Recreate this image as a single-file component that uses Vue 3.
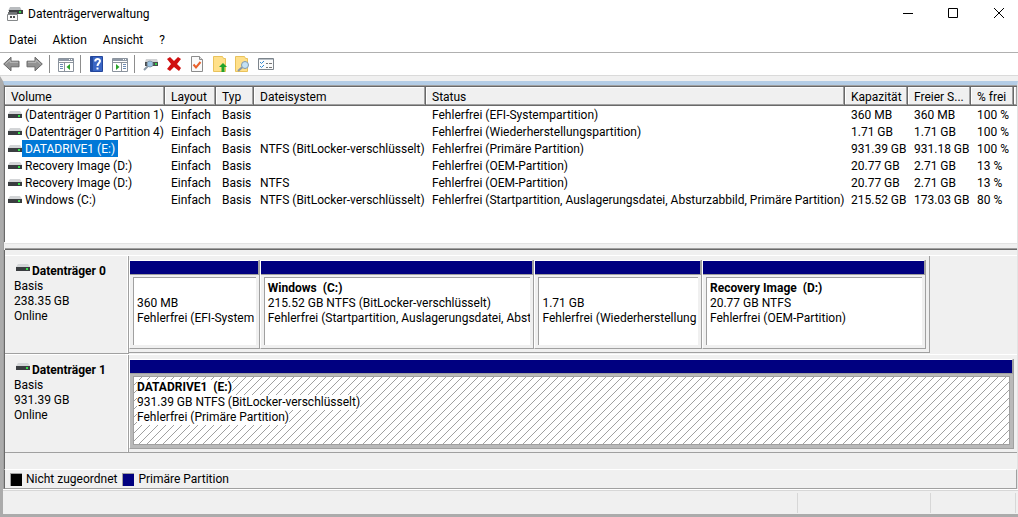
<script setup>
import { ref } from 'vue'

const columns = ['Volume', 'Layout', 'Typ', 'Dateisystem', 'Status', 'Kapazität', 'Freier S...', '% frei']

const volumes = [
  ['(Datenträger 0 Partition 1)', 'Einfach', 'Basis', '', 'Fehlerfrei (EFI-Systempartition)', '360 MB', '360 MB', '100 %'],
  ['(Datenträger 0 Partition 4)', 'Einfach', 'Basis', '', 'Fehlerfrei (Wiederherstellungspartition)', '1.71 GB', '1.71 GB', '100 %'],
  ['DATADRIVE1 (E:)', 'Einfach', 'Basis', 'NTFS (BitLocker-verschlüsselt)', 'Fehlerfrei (Primäre Partition)', '931.39 GB', '931.18 GB', '100 %'],
  ['Recovery Image (D:)', 'Einfach', 'Basis', '', 'Fehlerfrei (OEM-Partition)', '20.77 GB', '2.71 GB', '13 %'],
  ['Recovery Image (D:)', 'Einfach', 'Basis', 'NTFS', 'Fehlerfrei (OEM-Partition)', '20.77 GB', '2.71 GB', '13 %'],
  ['Windows (C:)', 'Einfach', 'Basis', 'NTFS (BitLocker-verschlüsselt)', 'Fehlerfrei (Startpartition, Auslagerungsdatei, Absturzabbild, Primäre Partition)', '215.52 GB', '173.03 GB', '80 %'],
]
const selected = ref(2)

const disks = [
  {
    name: 'Datenträger 0',
    size: '238.35 GB',
    span: 90.2,
    partitions: [
      { name: '', info: '360 MB', status: 'Fehlerfrei (EFI-System', weight: 130 },
      { name: 'Windows\u00a0 (C:)', info: '215.52 GB NTFS (BitLocker-verschlüsselt)', status: 'Fehlerfrei (Startpartition, Auslagerungsdatei, Abst', weight: 275 },
      { name: '', info: '1.71 GB', status: 'Fehlerfrei (Wiederherstellung', weight: 167 },
      { name: 'Recovery Image\u00a0 (D:)', info: '20.77 GB NTFS', status: 'Fehlerfrei (OEM-Partition)', weight: 224 },
    ],
  },
  {
    name: 'Datenträger 1',
    size: '931.39 GB',
    span: 100,
    partitions: [
      { name: 'DATADRIVE1\u00a0 (E:)', info: '931.39 GB NTFS (BitLocker-verschlüsselt)', status: 'Fehlerfrei (Primäre Partition)', weight: 1, active: true },
    ],
  },
]
</script>

<template>
  <div class="window">
    <header class="titlebar">
      <svg class="app-icon" width="16" height="16" viewBox="0 0 16 16" aria-hidden="true">
        <path d="M3 1h10l2 4H1z" fill="#b9bcbf" />
        <path d="M2 4h14v4H2z" fill="#3c3f41" />
        <path d="M12 5h2v2h-2z" fill="#35d04a" />
        <path d="M1 6h9v3H1z" fill="#6f7275" />
        <path d="M.5 8.500h10v6H.5z" fill="#fafafa" stroke="#85888a" />
        <path d="M3 10h2v2H3zM6 10h2v2H6z" fill="#4b4e50" />
      </svg>
      <h1>Datenträgerverwaltung</h1>
      <div class="caption">
        <button type="button" aria-label="Minimieren">
          <svg width="12" height="12" viewBox="0 0 12 12"><path d="M2 5.500h10" /></svg>
        </button>
        <button type="button" aria-label="Maximieren">
          <svg width="12" height="12" viewBox="0 0 12 12"><path d="M1.500.500h9v9h-9z" /></svg>
        </button>
        <button type="button" aria-label="Schließen">
          <svg width="12" height="12" viewBox="0 0 12 12"><path d="M1 0l10 10M11 0L1 10" /></svg>
        </button>
      </div>
    </header>

    <nav class="menu">
      <button type="button">Datei</button>
      <button type="button">Aktion</button>
      <button type="button">Ansicht</button>
      <button type="button">?</button>
    </nav>

    <div class="toolbar" role="toolbar" aria-label="Symbolleiste">
      <button type="button" aria-label="Zurück">
        <svg width="17" height="16" viewBox="0 0 17 16">
          <path d="M.7 8L8 1.200v4h8v5.600H8v4z" fill="#929292" stroke="#686868" />
          <path d="M2.500 8L7 4v2.300h8" fill="none" stroke="#bcbcbc" />
        </svg>
      </button>
      <button type="button" aria-label="Vorwärts">
        <svg width="17" height="16" viewBox="0 0 17 16">
          <path d="M16.300 8L9 1.200v4H1v5.600h8v4z" fill="#929292" stroke="#686868" />
          <path d="M2 6.300h8V4l4.500 4" fill="none" stroke="#bcbcbc" />
        </svg>
      </button>
      <span class="sep"></span>
      <button type="button" aria-label="Konsolenstruktur ein-/ausblenden">
        <svg width="16" height="15" viewBox="0 0 16 15">
          <path d="M.5 1.500h15v13H.5z" fill="#fff" stroke="#8b939d" />
          <path d="M1 2h14v2H1z" fill="#8e99a6" />
          <path d="M1 5.500h14M6.500 6v8" stroke="#8b939d" />
          <path d="M11 2h1v1h-1zM13 2h1v1h-1z" fill="#fff" />
          <path d="M2 7.500h3M2 9.500h3M2 11.500h3" stroke="#6b8bb5" />
          <path d="M12 7v6L8.500 10z" fill="#29a329" />
        </svg>
      </button>
      <span class="sep"></span>
      <button type="button" aria-label="Hilfe">
        <svg width="14" height="16" viewBox="0 0 14 16">
          <path d="M.5.500h12v15H.5z" fill="#3a66c5" stroke="#24479c" />
          <path d="M1 1h2v14H1z" fill="#254b9f" />
          <path d="M5.200 5.500C5.200 2.200 10 2.300 10 5c0 2-2.500 2.200-2.500 5" fill="none" stroke="#fff" stroke-width="2" />
          <path d="M6.500 11.500h2v2h-2z" fill="#fff" />
        </svg>
      </button>
      <button type="button" aria-label="Aktionsbereich ein-/ausblenden">
        <svg width="16" height="15" viewBox="0 0 16 15">
          <path d="M.5 1.500h15v13H.5z" fill="#fff" stroke="#8b939d" />
          <path d="M1 2h14v2H1z" fill="#8e99a6" />
          <path d="M1 5.500h14M9.500 6v8" stroke="#8b939d" />
          <path d="M11 2h1v1h-1zM13 2h1v1h-1z" fill="#fff" />
          <path d="M11 7.500h3M11 9.500h3M11 11.500h3" stroke="#6b8bb5" />
          <path d="M4 7v6l3.500-3z" fill="#29a329" />
        </svg>
      </button>
      <span class="sep"></span>
      <button type="button" aria-label="Datenträger prüfen">
        <svg width="16" height="16" viewBox="0 0 16 16">
          <path d="M3 3h11l1 3H2z" fill="#d0d2d4" />
          <path d="M2 6h13v4H2z" fill="#4a4d50" />
          <path d="M12 7h2v2h-2z" fill="#35d04a" />
          <path d="M5 10l-4 4" stroke="#8a98a5" stroke-width="2" />
          <circle cx="7" cy="8" r="3" fill="#9cc4e4" stroke="#8299ab" />
        </svg>
      </button>
      <button type="button" aria-label="Löschen">
        <svg width="16" height="16" viewBox="0 0 16 16">
          <path d="M1 3l3-2 4 4 4-4 3 2-4 5 4 4-2 3-5-4-4 4-3-2 4-5z" fill="#d01010" />
        </svg>
      </button>
      <button type="button" aria-label="Eigenschaften">
        <svg width="14" height="16" viewBox="0 0 14 16">
          <path d="M1.500.500h8l3 3v12h-11z" fill="#fafafa" stroke="#8c8c8c" />
          <path d="M9.500.500v3h3" fill="#ddd" stroke="#8c8c8c" />
          <path d="M3.500 8.500l2.500 3L10.500 6" fill="none" stroke="#e9602a" stroke-width="2" />
        </svg>
      </button>
      <button type="button" aria-label="Übergeordneter Ordner">
        <svg width="14" height="16" viewBox="0 0 14 16">
          <path d="M.5.500h9l1 2h2v13H.5z" fill="#ffe08a" stroke="#e9c25c" />
          <path d="M10 7l4 4h-2.500v5h-3v-5H6z" fill="#20a32c" />
        </svg>
      </button>
      <button type="button" aria-label="Suchen">
        <svg width="15" height="16" viewBox="0 0 15 16">
          <path d="M.5.500h9l1 2h2v13H.5z" fill="#ffe08a" stroke="#e9c25c" />
          <path d="M7.500 11L3 15" stroke="#8a98a5" stroke-width="2" />
          <circle cx="10" cy="9" r="3.500" fill="#c3e1f5" stroke="#8299ab" />
        </svg>
      </button>
      <button type="button" aria-label="Ansichtsoptionen">
        <svg width="16" height="14" viewBox="0 0 16 14">
          <path d="M.5 1.500h15v11H.5z" fill="#fbfbfb" stroke="#7d858c" />
          <path d="M1 2.500h14" stroke="#b9c0c7" />
          <path d="M2 5l1.500 1.500L6 4M2 9l1.500 1.500L6 8" fill="none" stroke="#2f86d0" />
          <path d="M8 6.500h2M11 6.500h3M8 10.500h2M11 10.500h3" stroke="#777" />
        </svg>
      </button>
    </div>

    <main class="client">
      <div class="console">
        <section class="list" aria-label="Volumes">
          <table>
            <colgroup>
              <col class="c-volume"><col class="c-layout"><col class="c-type"><col class="c-fs">
              <col><col class="c-size"><col class="c-size"><col class="c-free"><col class="c-end">
            </colgroup>
            <thead>
              <tr>
                <th v-for="c in columns" :key="c" scope="col">{{ c }}</th>
                <td class="filler"></td>
              </tr>
            </thead>
            <tbody>
              <tr v-for="(row, i) in volumes" :key="i" :class="{ selected: selected === i }" @click="selected = i">
                <td v-for="(cell, j) in row" :key="j">
                  <div v-if="j === 0" class="vol">
                    <svg width="14" height="8" viewBox="0 0 14 8" aria-hidden="true">
                      <path d="M2 0h10l2 3H0z" fill="#d3d5d7" />
                      <path d="M0 3h14v4H0z" fill="#3a3d40" />
                      <path d="M10 4h2v2h-2z" fill="#35e04a" />
                    </svg>
                    <span>{{ cell }}</span>
                  </div>
                  <template v-else>{{ cell }}</template>
                </td>
                <td></td>
              </tr>
            </tbody>
          </table>
        </section>
        <div class="splitter"></div>

        <section class="disks" aria-label="Datenträger">
          <article v-for="d in disks" :key="d.name" class="disk">
            <div class="disk-label">
              <h2>
                <svg width="14" height="8" viewBox="0 0 14 8" aria-hidden="true">
                  <path d="M2 0h10l2 3H0z" fill="#d3d5d7" />
                  <path d="M0 3h14v4H0z" fill="#3a3d40" />
                  <path d="M10 4h2v2h-2z" fill="#35e04a" />
                </svg>
                {{ d.name }}
              </h2>
              <p>Basis</p>
              <p>{{ d.size }}</p>
              <p>Online</p>
            </div>
            <div class="track">
              <div class="graph" :style="{ width: d.span + '%' }">
                <div
                  v-for="(p, i) in d.partitions"
                  :key="i"
                  class="part"
                  :class="{ active: p.active }"
                  :style="{ flexGrow: p.weight }"
                >
                  <div class="bar"></div>
                  <div class="body">
                    <div class="well">
                      <svg v-if="p.active" class="hatch" width="100%" height="100%" aria-hidden="true">
                        <defs>
                          <pattern id="hatch" width="8" height="8" patternUnits="userSpaceOnUse">
                            <path
                              d="M0 7h1v1H0zM1 6h1v1H1zM2 5h1v1H2zM3 4h1v1H3zM4 3h1v1H4zM5 2h1v1H5zM6 1h1v1H6zM7 0h1v1H7z"
                              fill="#a0a0a0"
                              shape-rendering="crispEdges"
                            />
                          </pattern>
                        </defs>
                        <rect width="100%" height="100%" fill="url(#hatch)" />
                      </svg>
                      <p class="name"><span>{{ p.name }}</span></p>
                      <p><span>{{ p.info }}</span></p>
                      <p><span>{{ p.status }}</span></p>
                    </div>
                  </div>
                </div>
              </div>
            </div>
          </article>
        </section>

        <ul class="legend">
          <li><i class="swatch none"></i>Nicht zugeordnet</li>
          <li><i class="swatch primary"></i>Primäre Partition</li>
        </ul>
      </div>
      <footer class="status"><span></span><span></span><span></span></footer>
    </main>
  </div>
</template>

<style>
body {
  margin: 0;
  background: #fff;
}
</style>

<style scoped>
* {
  box-sizing: border-box;
}
.window {
  display: flex;
  flex-direction: column;
  min-height: 100vh;
  background: #fff;
  color: #000;
  font: 12px/15px "Segoe UI", Roboto, "Noto Sans", sans-serif;
}
button {
  font: inherit;
  color: inherit;
  background: none;
  border: 0;
  padding: 0;
}
h1, h2, p, ul {
  margin: 0;
  padding: 0;
  font: inherit;
}
svg {
  display: block;
  flex: none;
}

.titlebar {
  display: flex;
  align-items: center;
  height: 28px;
  padding-left: 7px;
}
h1 {
  flex: 1;
  margin-left: 5px;
}
.caption {
  display: flex;
}
.caption button {
  display: grid;
  place-items: center;
  width: 46px;
  height: 28px;
}
.caption button:last-child {
  width: 38px;
  margin-left: 4px;
}
.caption path {
  fill: none;
  stroke: #000;
}

.menu {
  display: flex;
  height: 24px;
  padding-left: 1px;
}
.menu button {
  padding: 0 8px;
}

.toolbar {
  display: flex;
  align-items: center;
  height: 24px;
  border-top: 1px solid #b0b0b0;
  border-bottom: 1px solid #dadada;
}
.toolbar button {
  display: grid;
  place-items: center;
  width: 23px;
  height: 22px;
}
.sep {
  width: 1px;
  height: 18px;
  margin: 0 4px 0 3px;
  background: #8d8d8d;
}

.client {
  flex: 1;
  display: flex;
  flex-direction: column;
  border-top: 5px solid #f0f0f0;
  border-bottom: 3px solid #ababab;
  border-left: 3px solid #ababab;
  background: #f0f0f0;
}
.console {
  flex: 1;
  display: flex;
  flex-direction: column;
  border-top: 4px solid #b4cde6;
  border-left: 1px solid #a0a0a0;
  border-right: 1px solid #e3e3e3;
}
.list {
  height: 157px;
  background: #fff;
  border-top: 1px solid #a0a0a0;
  border-left: 1px solid #696969;
  box-shadow: inset 0 1px #696969;
  padding-top: 1px;
}
table {
  width: 100%;
  table-layout: fixed;
  border-collapse: separate;
  border-spacing: 0;
}
.c-volume { width: 160px; }
.c-layout { width: 51px; }
.c-type { width: 38px; }
.c-fs { width: 172px; }
.c-size { width: 63px; }
.c-free { width: 43px; }
.c-end { width: 3px; }
th, td {
  height: 17px;
  padding: 2px 0 0 6px;
  text-align: left;
  font-weight: 400;
  white-space: nowrap;
}
th, .filler {
  height: 19px;
  background: #f0f0f0;
  border-right: 1px solid #696969;
  border-bottom: 1px solid #696969;
  box-shadow: inset -1px -1px #a0a0a0, inset 1px 1px #fff;
}
.filler {
  padding: 0;
  border-right: 0;
}
tbody td:first-child {
  padding: 0 0 0 3px;
}
.vol {
  display: flex;
  align-items: center;
}
.vol span {
  padding: 2px 3px 0;
}
.selected .vol span {
  background: #0078d7;
  color: #fff;
}
.splitter {
  height: 8px;
  margin-left: 1px;
  background: #f0f0f0;
  border-top: 1px solid #fff;
  border-bottom: 1px solid #696969;
  box-shadow: inset 0 -1px #a0a0a0, inset 0 1px #e3e3e3;
}

.disks {
  flex: 1;
  padding-top: 5px;
  border-left: 1px solid #696969;
}
.disk {
  display: flex;
  height: 99px;
  border-top: 1px solid #fff;
}
.disk-label {
  width: 124px;
  padding: 8px 0 0 9px;
  border-right: 1px solid #a0a0a0;
  border-bottom: 1px solid #a0a0a0;
  box-shadow: inset -1px 0 #fff;
}
h2 {
  display: flex;
  gap: 2px;
  padding-left: 2px;
  font-weight: 700;
}
.track {
  flex: 1;
  min-width: 0;
  padding-bottom: 1px;
}
.disk:last-child .track {
  border-bottom: 1px solid #a0a0a0;
}
.graph {
  display: flex;
  height: 97px;
  padding: 4px 3px 3px 0;
  border-right: 1px solid #a0a0a0;
  border-bottom: 1px solid #a0a0a0;
}
.disk:last-child .graph {
  border: 0;
  padding-right: 3px;
}
.part {
  flex: 1 1 0;
  min-width: 0;
  display: flex;
  flex-direction: column;
  border-left: 1px solid #fff;
  border-right: 1px solid #a0a0a0;
  border-bottom: 1px solid #a0a0a0;
}
.bar {
  height: 15px;
  background: #000080;
  border-top: 1px solid #fff;
  border-right: 1px solid #a0a0a0;
  border-bottom: 1px solid #a0a0a0;
}
.body {
  flex: 1;
  display: flex;
  padding: 2px 3px 3px;
}
.well {
  position: relative;
  flex: 1;
  min-width: 0;
  padding: 3px 0 0 3px;
  overflow: hidden;
  white-space: nowrap;
  background: #fff;
  border-top: 1px solid #a0a0a0;
  border-left: 1px solid #a0a0a0;
}
.well p {
  position: relative;
  height: 15px;
}
.name {
  font-weight: 700;
}
.active .body {
  background: #b9b9b9;
}
.active .well {
  border: 1px solid #a0a0a0;
}
.active .well span {
  display: inline-block;
  background: #fff;
}
.hatch {
  position: absolute;
  inset: 0;
}

.legend {
  display: flex;
  align-items: center;
  gap: 5px;
  height: 20px;
  padding-left: 5px;
  list-style: none;
  border-top: 1px solid #fff;
  border-left: 1px solid #696969;
  border-right: 1px solid #a0a0a0;
  border-bottom: 1px solid #a0a0a0;
}
.legend li {
  display: flex;
  align-items: center;
  gap: 4px;
}
.swatch {
  width: 12px;
  height: 13px;
  border: 1px solid #a0a0a0;
  border-width: 1px 0 0 1px;
}
.none { background: #000; }
.primary { background: #000080; }

.status {
  display: flex;
  height: 25px;
  border-top: 1px solid #fff;
  box-shadow: inset 0 1px #d7d7d7;
  padding: 3px 2px 1px 0;
}
.status span {
  border-right: 1px solid #d7d7d7;
  flex: 0 0 133px;
}
.status span:first-child {
  flex: 1;
}
.status span:last-child {
  flex-basis: 85px;
}
</style>
